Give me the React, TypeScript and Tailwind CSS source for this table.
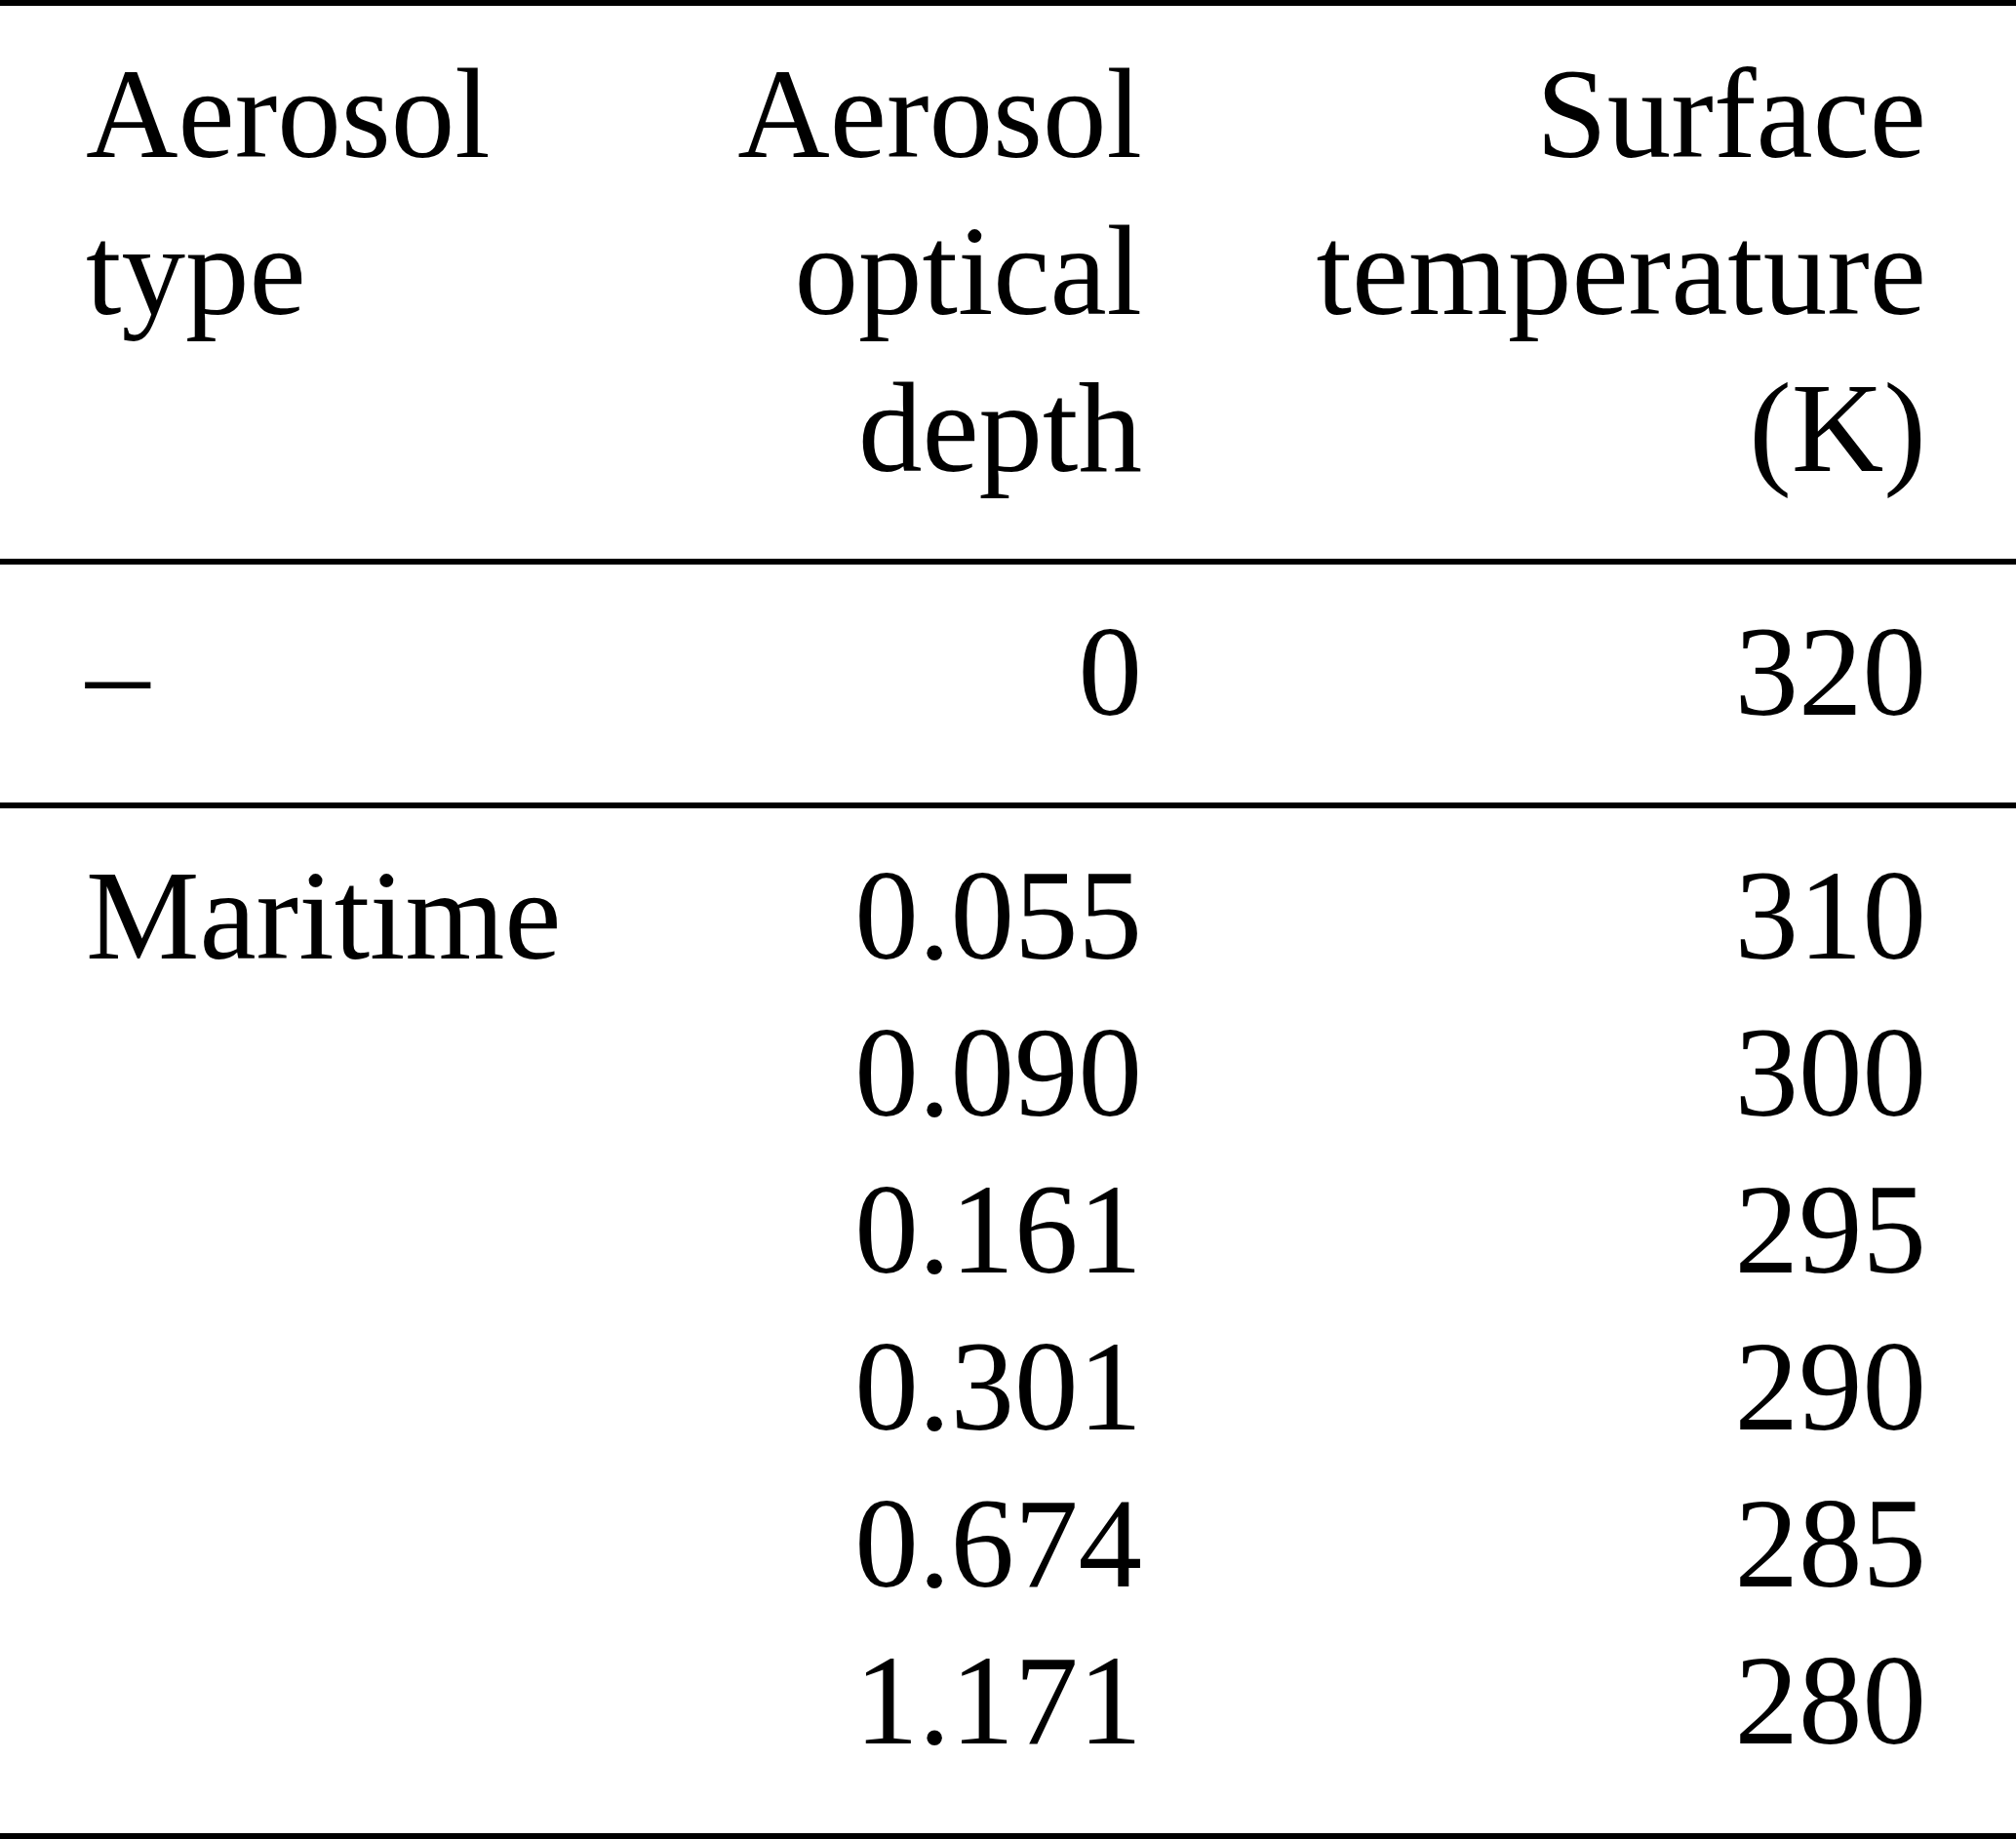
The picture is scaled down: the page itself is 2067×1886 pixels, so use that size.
// Aerosol table: three columns, booktabs-style rules, large serif type.
const rows: { type: string; depth: string; temp: string }[] = [
  { type: 'Maritime', depth: '0.055', temp: '310' },
  { type: '', depth: '0.090', temp: '300' },
  { type: '', depth: '0.161', temp: '295' },
  { type: '', depth: '0.301', temp: '290' },
  { type: '', depth: '0.674', temp: '285' },
  { type: '', depth: '1.171', temp: '280' },
];

function Row({ a, b, c }: { a: React.ReactNode; b: React.ReactNode; c: React.ReactNode }) {
  return (
    <div className="grid grid-cols-[600px_483px_804px] pl-[88px] pr-[92px]">
      <div className="text-left">{a}</div>
      <div className="text-right">{b}</div>
      <div className="text-right">{c}</div>
    </div>
  );
}

export default function App() {
  return (
    <div
      className="min-h-screen w-[2067px] bg-white text-black text-[131px] leading-[161px]"
      style={{ fontFamily: '"Liberation Serif", "Times New Roman", serif' }}
    >
      <div className="h-[6px] bg-black" />
      <div className="pt-[30px] pb-[54px]">
        <Row
          a={
            <>
              Aerosol
              <br />
              type
            </>
          }
          b={
            <>
              Aerosol
              <br />
              optical
              <br />
              depth
            </>
          }
          c={
            <>
              Surface
              <br />
              temperature
              <br />
              (K)
            </>
          }
        />
      </div>
      <div className="h-[6px] bg-black" />
      <div className="pt-[29px] pb-[54px]">
        <Row a="–" b="0" c="320" />
      </div>
      <div className="h-[6px] bg-black" />
      <div className="pt-[29px] pb-[56px]">
        {rows.map((r) => (
          <Row key={r.depth} a={r.type} b={r.depth} c={r.temp} />
        ))}
      </div>
      <div className="h-[6px] bg-black" />
    </div>
  );
}
